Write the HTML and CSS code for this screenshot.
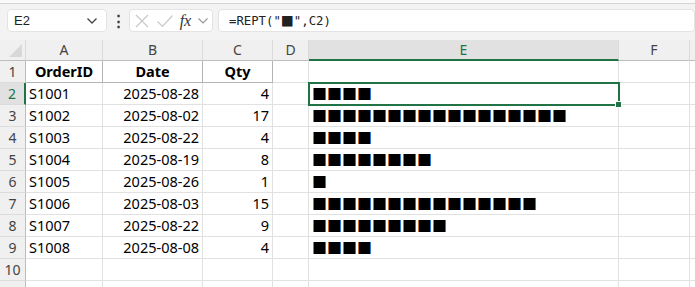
FILE: index.html
```html
<!DOCTYPE html>
<html lang="en">
<head>
  <meta charset="UTF-8">
  <title>REPT bars</title>
  <link rel="stylesheet" href="styles.css">
</head>
<body>
  <div class="topstrip"></div>
  <div class="formula-row">
    <div class="namebox">
      <span>E2</span>
      <svg class="chev" width="12" height="8" viewBox="0 0 12 8"><path d="M1.5 1.5 L6 6 L10.5 1.5" fill="none" stroke="#444" stroke-width="1.3"/></svg>
    </div>
    <div class="dots">&#8942;</div>
    <div class="fxbox">
      <svg width="16" height="16" viewBox="0 0 16 16"><path d="M2 2 L14 14 M14 2 L2 14" stroke="#c8c8c8" stroke-width="1.2"/></svg>
      <svg width="18" height="16" viewBox="0 0 18 16"><path d="M1.5 8.5 L6.5 13.5 L16.5 2.5" fill="none" stroke="#c8c8c8" stroke-width="1.2"/></svg>
      <span class="fx">fx</span>
      <svg class="chev" width="12" height="8" viewBox="0 0 12 8"><path d="M1.5 1.5 L6 6 L10.5 1.5" fill="none" stroke="#999" stroke-width="1.2"/></svg>
    </div>
    <div class="formula">=REPT("<span class="sq">■</span>",C2)</div>
  </div>

  <div class="sheet">
    <div class="hd corner"><span class="tri"></span></div>
    <div class="hd">A</div>
    <div class="hd">B</div>
    <div class="hd">C</div>
    <div class="hd">D</div>
    <div class="hd hd-active">E</div>
    <div class="hd">F</div>
    <div class="hd"></div>

    <div class="rh">1</div>
    <div class="c th">OrderID</div>
    <div class="c th">Date</div>
    <div class="c th">Qty</div>
    <div class="c"></div><div class="c"></div><div class="c"></div><div class="c"></div>

    <div class="rh rh-active">2</div>
    <div class="c">S1001</div><div class="c num">2025-08-28</div><div class="c num">4</div><div class="c"></div>
    <div class="c bar sel">■■■■<span class="handle"></span></div><div class="c"></div><div class="c"></div>

    <div class="rh">3</div>
    <div class="c">S1002</div><div class="c num">2025-08-02</div><div class="c num">17</div><div class="c"></div>
    <div class="c bar">■■■■■■■■■■■■■■■■■</div><div class="c"></div><div class="c"></div>

    <div class="rh">4</div>
    <div class="c">S1003</div><div class="c num">2025-08-22</div><div class="c num">4</div><div class="c"></div>
    <div class="c bar">■■■■</div><div class="c"></div><div class="c"></div>

    <div class="rh">5</div>
    <div class="c">S1004</div><div class="c num">2025-08-19</div><div class="c num">8</div><div class="c"></div>
    <div class="c bar">■■■■■■■■</div><div class="c"></div><div class="c"></div>

    <div class="rh">6</div>
    <div class="c">S1005</div><div class="c num">2025-08-26</div><div class="c num">1</div><div class="c"></div>
    <div class="c bar">■</div><div class="c"></div><div class="c"></div>

    <div class="rh">7</div>
    <div class="c">S1006</div><div class="c num">2025-08-03</div><div class="c num">15</div><div class="c"></div>
    <div class="c bar">■■■■■■■■■■■■■■■</div><div class="c"></div><div class="c"></div>

    <div class="rh">8</div>
    <div class="c">S1007</div><div class="c num">2025-08-22</div><div class="c num">9</div><div class="c"></div>
    <div class="c bar">■■■■■■■■■</div><div class="c"></div><div class="c"></div>

    <div class="rh">9</div>
    <div class="c">S1008</div><div class="c num">2025-08-08</div><div class="c num">4</div><div class="c"></div>
    <div class="c bar">■■■■</div><div class="c"></div><div class="c"></div>

    <div class="rh">10</div>
    <div class="c"></div><div class="c"></div><div class="c"></div><div class="c"></div>
    <div class="c"></div><div class="c"></div><div class="c"></div>

    <div class="rh"></div>
    <div class="c"></div><div class="c"></div><div class="c"></div><div class="c"></div>
    <div class="c"></div><div class="c"></div><div class="c"></div>
  </div>
</body>
</html>
```

FILE: styles.css
```css
html, body {
  overflow: hidden;
}
body {
  margin: 0;
  width: 695px;
  height: 287px;
  background: #ffffff;
  font-family: "Liberation Sans", Arial, sans-serif;
  color: #000;
}
.topstrip {
  height: 3px;
  background: #fafafa;
  border-bottom: 1px solid #d6d6d6;
}
.formula-row {
  display: flex;
  align-items: center;
  height: 36px;
  padding: 1px 0 4px 7px;
  background: #f3f3f3;
  box-sizing: border-box;
}
.namebox, .fxbox, .formula {
  height: 23px;
  background: #fff;
  border: 1px solid #e3e3e3;
  border-radius: 4px;
  box-sizing: border-box;
  display: flex;
  align-items: center;
}
.namebox {
  width: 100px;
  padding: 0 8px 0 6px;
  justify-content: space-between;
  font-size: 13px;
  color: #222;
}
.dots {
  width: 22px;
  text-align: center;
  font-size: 15px;
  font-weight: bold;
  color: #333;
}
.fxbox {
  width: 84px;
  padding: 0 3px 0 4px;
  justify-content: space-between;
}
.fx {
  font-family: "Liberation Serif", serif;
  font-style: italic;
  font-size: 16px;
  color: #333;
}
.formula {
  flex: 1;
  margin-left: 5px;
  padding-left: 10px;
  font-family: "DejaVu Sans Mono", monospace;
  font-size: 12.3px;
  color: #222;
  white-space: pre;
}
.sq {
  font-family: "Noto Sans CJK SC", sans-serif;
  font-size: 13px;
}
.sheet {
  display: grid;
  grid-template-columns: 26px 77px 100px 70px 36px 310px 71px 1fr;
  grid-template-rows: 21px;
  grid-auto-rows: 22px;
  height: 247px;
  overflow: hidden;
}
.hd {
  background: #f0f0f0;
  border-right: 1px solid #dadada;
  border-bottom: 1px solid #bdbdbd;
  box-sizing: border-box;
  text-align: center;
  font-family: "Noto Sans", sans-serif;
  font-size: 14px;
  line-height: 20px;
  color: #444;
}
.corner {
  position: relative;
}
.tri {
  position: absolute;
  right: 3px;
  bottom: 3px;
  width: 0;
  height: 0;
  border-left: 13px solid transparent;
  border-bottom: 13px solid #d8d8d8;
}
.hd-active {
  background: #e1e1e1;
  color: #217346;
  border-bottom: 2px solid #217346;
}
.rh {
  background: #f0f0f0;
  border-right: 1px solid #bdbdbd;
  border-bottom: 1px solid #dcdcdc;
  box-sizing: border-box;
  text-align: center;
  font-family: "Noto Sans", sans-serif;
  font-size: 14px;
  line-height: 21px;
  color: #444;
}
.rh-active {
  background: #e1e1e1;
  color: #217346;
  border-right: 2px solid #217346;
}
.c {
  border-right: 1px solid #e1e1e1;
  border-bottom: 1px solid #e1e1e1;
  box-sizing: border-box;
  font-family: "Noto Sans", sans-serif;
  font-size: 14.5px;
  line-height: 21px;
  padding: 0 3px;
  white-space: nowrap;
  overflow: hidden;
}
.th {
  font-weight: bold;
  text-align: center;
  border-right-color: #b4b4b4;
  border-bottom-color: #b4b4b4;
}
.num {
  text-align: right;
}
.bar {
  font-family: "Noto Sans CJK SC", sans-serif;
  font-size: 15px;
  padding-left: 3px;
  overflow: visible;
  position: relative;
}
.sel {
  outline: 2px solid #217346;
  outline-offset: -1px;
  z-index: 1;
}
.handle {
  position: absolute;
  right: -4px;
  bottom: -4px;
  width: 5px;
  height: 5px;
  background: #217346;
  border: 1px solid #fff;
}
```
